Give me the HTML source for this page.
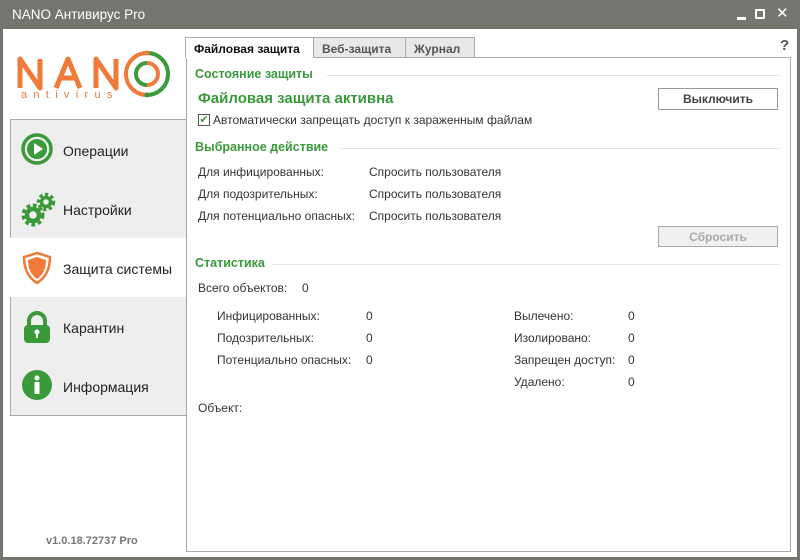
<!DOCTYPE html>
<html><head><meta charset="utf-8"><style>
*{margin:0;padding:0;box-sizing:border-box}
body{width:800px;height:560px;background:#75746f;font-family:"Liberation Sans","DejaVu Sans",sans-serif;font-size:12px;color:#222;position:relative;overflow:hidden}
.win{position:absolute;left:3px;top:29px;width:794px;height:528px;background:#fff}
.title{position:absolute;left:12px;top:7px;color:#fff;font-size:13.5px}
.ab{position:absolute}
.menu{position:absolute;left:10px;top:119px;width:177px;height:297px;background:#eee;border:1px solid #aaa}
.item{position:absolute;left:0;width:176px;height:59px}
.item span{position:absolute;left:52px;top:23px;font-size:14px;color:#222}
.item svg{position:absolute;left:10px;top:13px}
.panel{position:absolute;left:186px;top:57px;width:605px;height:495px;border:1px solid #aaa;background:#fff}
.tab{position:absolute;top:37px;height:21px;border:1px solid #aaa;background:#e8e8e8;font-weight:bold;color:#555;padding:4px 8px 0;font-size:12px}
.h{position:absolute;color:#3a9a3a;font-weight:bold;font-size:12.5px}
.line{position:absolute;height:1px;background:#e2e2e2}
.t{position:absolute;color:#333;font-size:12px;white-space:nowrap}
.btn{position:absolute;border:1px solid #999;background:#fff;text-align:center;font-weight:bold;color:#444;font-size:12px;padding-top:3px}
</style></head><body>
<div class="title">NANO Антивирус Pro</div>
<div class="ab" style="left:737px;top:17px;width:9px;height:3px;background:#fff"></div>
<div class="ab" style="left:755px;top:9px;width:10px;height:10px;border:2px solid #fff"></div>
<div class="ab" style="left:776px;top:4px;color:#fff;font-weight:bold;font-size:15px">✕</div>
<div class="win"></div>
<!-- logo -->
<svg class="ab" style="left:14px;top:54px" width="112" height="46" viewBox="0 0 112 46">
<g fill="none" stroke="#ef7a3a" stroke-width="5" stroke-linejoin="round">
<path d="M6 34 V5 L26 34 V5"/>
<path d="M42 34 L54 5 L66 34 M46 24 H62"/>
<path d="M82 34 V5 L102 34 V5"/>
</g>
<text x="7" y="44" fill="#ef7a3a" font-size="11" font-family="Liberation Sans" letter-spacing="6.3">antivirus</text>
</svg>
<svg class="ab" style="left:123px;top:50px" width="48" height="48" viewBox="0 0 48 48">
<path d="M24 3 A21 21 0 0 0 24 45" fill="none" stroke="#ef7a3a" stroke-width="4"/>
<path d="M24 3 A21 21 0 0 1 24 45" fill="none" stroke="#3a9a3a" stroke-width="4"/>
<path d="M24 13 A11 11 0 0 0 24 35" fill="none" stroke="#3a9a3a" stroke-width="4"/>
<path d="M24 13 A11 11 0 0 1 24 35" fill="none" stroke="#ef7a3a" stroke-width="4"/>
<circle cx="24" cy="3" r="2.5" fill="#ef7a3a"/><circle cx="24" cy="45" r="2.5" fill="#3a9a3a"/>
</svg>
<div class="menu">
<div class="item" style="top:0"><svg width="32" height="32"><circle cx="16" cy="16" r="14" fill="none" stroke="#3a9a3a" stroke-width="3.5"/><circle cx="16" cy="16" r="10" fill="#3a9a3a"/><path d="M13 10 L22 16 L13 22Z" fill="#fff"/></svg><span>Операции</span></div>
<div class="item" style="top:59px"><svg width="36" height="36"><circle cx="12" cy="23" r="9" fill="none" stroke="#3a9a3a" stroke-width="5" stroke-dasharray="3.5 2.5"/><circle cx="12" cy="23" r="6" fill="none" stroke="#3a9a3a" stroke-width="4.5"/><circle cx="25" cy="10" r="7" fill="none" stroke="#3a9a3a" stroke-width="4.5" stroke-dasharray="3 2.3"/><circle cx="25" cy="10" r="4.5" fill="none" stroke="#3a9a3a" stroke-width="3.5"/></svg><span>Настройки</span></div>
<div class="item" style="top:118px;background:#fff;left:-1px;width:178px"><svg width="32" height="34" style="left:11px"><path d="M16 2 L29 6 Q29 24 16 32 Q3 24 3 6Z" fill="#fff" stroke="#ef7a3a" stroke-width="2.5"/><path d="M16 6 L25 9 Q25 22 16 28 Q7 22 7 9Z" fill="#ef7a3a"/></svg><span style="left:53px">Защита системы</span></div>
<div class="item" style="top:177px"><svg width="32" height="34"><path d="M8 16 V11 A8 8 0 0 1 24 11 V16" fill="none" stroke="#3a9a3a" stroke-width="4"/><rect x="3" y="15" width="26" height="18" rx="4" fill="#3a9a3a"/><circle cx="16" cy="22" r="2.5" fill="#fff"/><rect x="15" y="23" width="2" height="5" fill="#fff"/></svg><span>Карантин</span></div>
<div class="item" style="top:236px"><svg width="32" height="32"><circle cx="16" cy="16" r="15" fill="#3a9a3a"/><circle cx="16" cy="9" r="2.5" fill="#fff"/><rect x="13.5" y="13" width="5" height="12" fill="#fff"/></svg><span>Информация</span></div>
</div>
<div class="ab" style="left:46px;top:535px;color:#777;font-weight:bold;font-size:11px">v1.0.18.72737 Pro</div>
<div class="panel"></div>
<div class="tab" style="left:185px;width:129px;background:#fff;border-bottom-color:#fff;color:#111">Файловая защита</div>
<div class="tab" style="left:313px;width:93px">Веб-защита</div>
<div class="tab" style="left:405px;width:70px">Журнал</div>
<div class="ab" style="left:780px;top:37px;font-weight:bold;font-size:15px;color:#555">?</div>
<div class="h" style="left:195px;top:67px">Состояние защиты</div><div class="line" style="left:327px;top:75px;width:452px"></div>
<div class="ab" style="left:198px;top:90px;color:#3a9a3a;font-weight:bold;font-size:15px">Файловая защита активна</div>
<div class="btn" style="left:658px;top:88px;width:120px;height:22px">Выключить</div>
<div class="ab" style="left:198px;top:114px;width:12px;height:12px;border:1px solid #555;color:#3a9a3a;font-size:11px;line-height:10px;text-align:center;font-weight:bold">✔</div>
<div class="t" style="left:213px;top:113px">Автоматически запрещать доступ к зараженным файлам</div>
<div class="h" style="left:195px;top:140px">Выбранное действие</div><div class="line" style="left:340px;top:148px;width:439px"></div>
<div class="t" style="left:198px;top:165px">Для инфицированных:</div><div class="t" style="left:369px;top:165px">Спросить пользователя</div>
<div class="t" style="left:198px;top:187px">Для подозрительных:</div><div class="t" style="left:369px;top:187px">Спросить пользователя</div>
<div class="t" style="left:198px;top:209px">Для потенциально опасных:</div><div class="t" style="left:369px;top:209px">Спросить пользователя</div>
<div class="btn" style="left:658px;top:226px;width:120px;height:21px;background:#f0f0f0;border-color:#aaa;color:#aaa">Сбросить</div>
<div class="h" style="left:195px;top:256px">Статистика</div><div class="line" style="left:272px;top:264px;width:507px"></div>
<div class="t" style="left:198px;top:281px">Всего объектов:</div><div class="t" style="left:302px;top:281px">0</div>
<div class="t" style="left:217px;top:309px">Инфицированных:</div><div class="t" style="left:366px;top:309px">0</div>
<div class="t" style="left:217px;top:331px">Подозрительных:</div><div class="t" style="left:366px;top:331px">0</div>
<div class="t" style="left:217px;top:353px">Потенциально опасных:</div><div class="t" style="left:366px;top:353px">0</div>
<div class="t" style="left:514px;top:309px">Вылечено:</div><div class="t" style="left:628px;top:309px">0</div>
<div class="t" style="left:514px;top:331px">Изолировано:</div><div class="t" style="left:628px;top:331px">0</div>
<div class="t" style="left:514px;top:353px">Запрещен доступ:</div><div class="t" style="left:628px;top:353px">0</div>
<div class="t" style="left:514px;top:375px">Удалено:</div><div class="t" style="left:628px;top:375px">0</div>
<div class="t" style="left:198px;top:401px">Объект:</div>
</body></html>
